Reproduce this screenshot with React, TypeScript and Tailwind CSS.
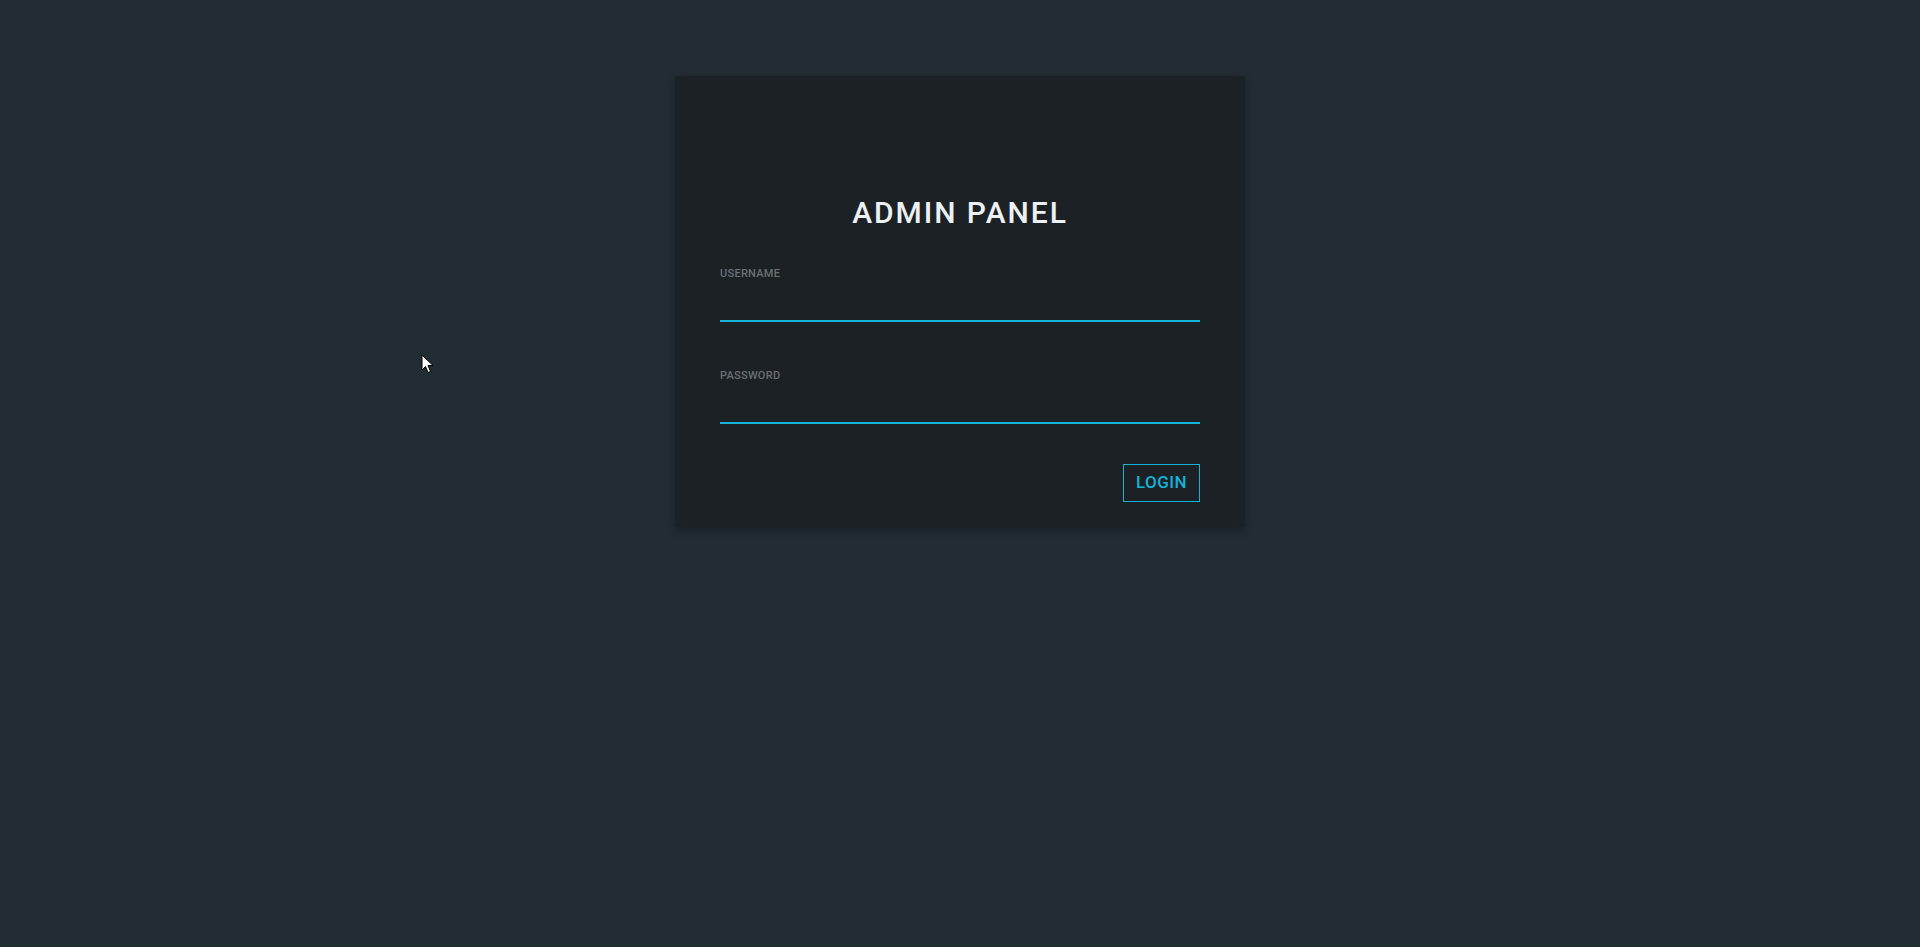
import { useState } from 'react';

function Field({ label, type = 'text', value, onChange }: { label: string; type?: string; value: string; onChange: (v: string) => void }) {
  return (
    <label className="block">
      <span className="block text-[11px] leading-4 font-medium tracking-wide text-[#6b7074]">{label}</span>
      <input
        type={type}
        value={value}
        onChange={(e) => onChange(e.target.value)}
        className="block h-[40px] w-full border-b-2 border-[#14b4d9] bg-transparent text-[15px] text-[#e8ecef] outline-none"
      />
    </label>
  );
}

export default function App() {
  const [username, setUsername] = useState('');
  const [password, setPassword] = useState('');

  return (
    <div className="relative min-h-[947px] w-full bg-[#222c33] pt-[76px] font-['Roboto',sans-serif]">
      <div className="mx-auto w-[570px] bg-[#1b2125] px-[45px] pt-[119px] pb-[25px] shadow-[0_4px_10px_rgba(0,0,0,0.25)]">
        <h1 className="text-center text-[30px] leading-9 font-medium tracking-[0.065em] text-[#eef1f4]">ADMIN PANEL</h1>

        <div className="mt-[35px]">
          <Field label="USERNAME" value={username} onChange={setUsername} />
        </div>
        <div className="mt-[46px]">
          <Field label="PASSWORD" type="password" value={password} onChange={setPassword} />
        </div>

        <div className="mt-[40px] flex justify-end">
          <button className="h-[38px] w-[77px] border border-[#14b4d9] text-[17px] font-medium tracking-wide text-[#14b4d9]">
            LOGIN
          </button>
        </div>
      </div>

      {/* mouse pointer from the screenshot */}
      <svg className="absolute left-[421px] top-[354px]" width="13" height="20" viewBox="0 0 13 20">
        <path d="M1 1 L1 16 L4.5 12.5 L7 18.5 L9.5 17.5 L7 11.5 L12 11.5 Z" fill="#fff" stroke="#000" strokeWidth="1" strokeLinejoin="round" />
      </svg>
    </div>
  );
}
